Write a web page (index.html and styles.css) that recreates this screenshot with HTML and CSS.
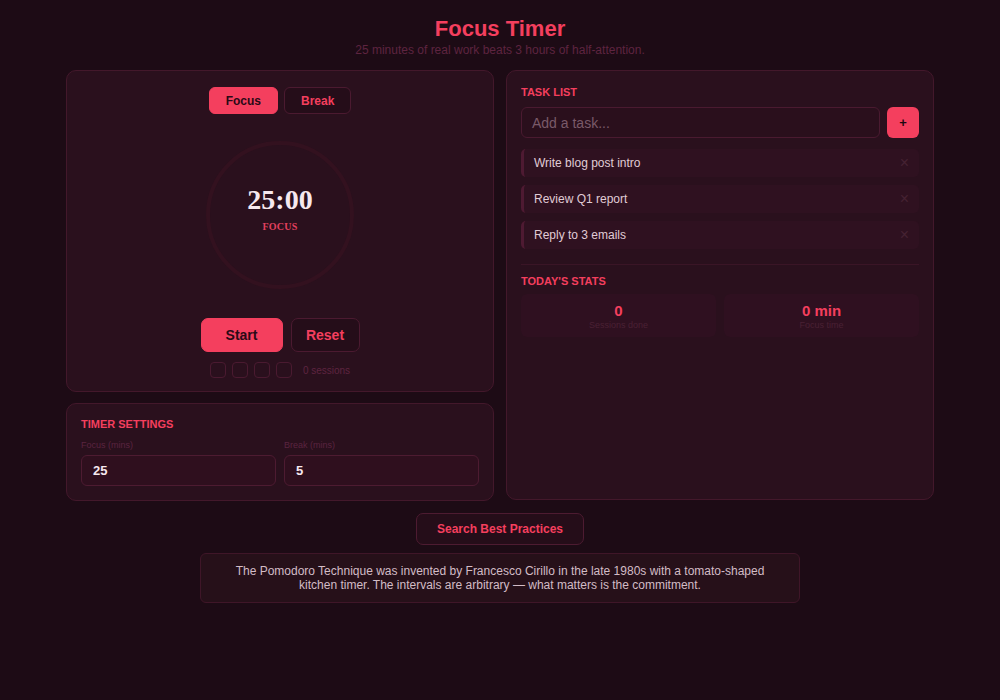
FILE: index.html
```html
<!DOCTYPE html>
<html lang="en">
<head>
<meta charset="utf-8">
<title>Focus Timer</title>
<link rel="stylesheet" href="styles.css">
</head>
<body>
<header class="header">
  <h1 class="title">Focus Timer</h1>
  <p class="subtitle">25 minutes of real work beats 3 hours of half-attention.</p>
</header>
<main class="grid">
  <div class="col">
    <section class="card timer-card">
      <div class="tabs">
        <button class="tab tab-active">Focus</button>
        <button class="tab">Break</button>
      </div>
      <div class="ring">
        <div class="time">25:00</div>
        <div class="mode">FOCUS</div>
      </div>
      <div class="controls">
        <button class="btn btn-primary">Start</button>
        <button class="btn btn-ghost">Reset</button>
      </div>
      <div class="sessions">
        <span class="dot"></span><span class="dot"></span><span class="dot"></span><span class="dot"></span>
        <span class="sessions-label">0 sessions</span>
      </div>
    </section>
    <section class="card settings-card">
      <h2 class="section-title">TIMER SETTINGS</h2>
      <div class="settings-row">
        <label class="field">
          <span class="field-label">Focus (mins)</span>
          <span class="field-input">25</span>
        </label>
        <label class="field">
          <span class="field-label">Break (mins)</span>
          <span class="field-input">5</span>
        </label>
      </div>
    </section>
  </div>
  <section class="card task-card">
    <h2 class="section-title">TASK LIST</h2>
    <div class="add-row">
      <div class="task-input">Add a task...</div>
      <button class="add-btn">+</button>
    </div>
    <ul class="tasks">
      <li class="task"><span>Write blog post intro</span><span class="x">×</span></li>
      <li class="task"><span>Review Q1 report</span><span class="x">×</span></li>
      <li class="task"><span>Reply to 3 emails</span><span class="x">×</span></li>
    </ul>
    <hr class="divider">
    <h2 class="section-title">TODAY'S STATS</h2>
    <div class="stats">
      <div class="stat"><div class="stat-value">0</div><div class="stat-label">Sessions done</div></div>
      <div class="stat"><div class="stat-value">0 min</div><div class="stat-label">Focus time</div></div>
    </div>
  </section>
</main>
<footer class="footer">
  <button class="search-btn">Search Best Practices</button>
  <div class="fact">The Pomodoro Technique was invented by Francesco Cirillo in the late 1980s with a tomato-shaped kitchen timer. The intervals are arbitrary — what matters is the commitment.</div>
</footer>
</body>
</html>
```
FILE: styles.css
```css
* { box-sizing: border-box; }
html, body { margin: 0; padding: 0; }
body {
  background: #1d0b15;
  font-family: "Liberation Sans", Arial, sans-serif;
  color: #e6d3dc;
  width: 1000px;
  height: 700px;
  overflow: hidden;
}
button { font-family: inherit; cursor: pointer; }

.header { text-align: center; padding-top: 16px; }
.title {
  margin: 0;
  font-size: 22px;
  line-height: 25px;
  font-weight: 700;
  color: #f43f5e;
}
.subtitle {
  margin: 2px 0 0;
  font-size: 12px;
  line-height: 14px;
  color: #5e2440;
}

.grid {
  width: 868px;
  margin: 13px auto 0;
  display: grid;
  grid-template-columns: 428px 428px;
  gap: 12px;
}
.col { display: flex; flex-direction: column; gap: 11px; }

.card {
  background: #2a101d;
  border: 1px solid #43182b;
  border-radius: 10px;
}

.timer-card {
  height: 322px;
  padding: 16px 14px 0;
  display: flex;
  flex-direction: column;
  align-items: center;
}
.tabs { display: flex; gap: 6px; }
.tab {
  height: 27px;
  padding: 0 16px;
  font-size: 12px;
  font-weight: 700;
  border-radius: 6px;
  border: 1px solid #4b1a30;
  background: #250d19;
  color: #f43f5e;
}
.tab-active {
  background: #f43f5e;
  border-color: #f43f5e;
  color: #2a0a16;
}

.ring {
  margin-top: 27px;
  width: 148px;
  height: 148px;
  border-radius: 50%;
  border: 4px solid #33111f;
  display: flex;
  flex-direction: column;
  align-items: center;
  justify-content: center;
  font-family: "Liberation Serif", "Times New Roman", serif;
  font-weight: 700;
}
.time { font-size: 28px; line-height: 30px; color: #f6e8ee; margin-top: -12px; }
.mode { font-size: 10px; line-height: 12px; color: #e2405f; margin-top: 6px; letter-spacing: 0.2px; }

.controls { display: flex; gap: 8px; margin-top: 29px; }
.btn {
  height: 34px;
  border-radius: 7px;
  font-size: 14px;
  font-weight: 700;
}
.btn-primary {
  width: 82px;
  background: #f43f5e;
  border: 1px solid #f43f5e;
  color: #2a0a16;
}
.btn-ghost {
  width: 69px;
  background: #250d19;
  border: 1px solid #4b1a30;
  color: #f43f5e;
}
.sessions { display: flex; align-items: center; gap: 6px; margin-top: 10px; }
.dot {
  width: 16px;
  height: 16px;
  border: 1px solid #4a1a30;
  border-radius: 4px;
}
.sessions-label { font-size: 10px; color: #5e2440; margin-left: 5px; }

.settings-card { height: 98px; padding: 14px 14px 0; }
.section-title {
  margin: 0;
  font-size: 11px;
  line-height: 13px;
  font-weight: 700;
  color: #f43f5e;
}
.settings-row {
  display: grid;
  grid-template-columns: 1fr 1fr;
  gap: 8px;
  margin-top: 9px;
}
.field { display: flex; flex-direction: column; }
.field-label { font-size: 9px; line-height: 11px; color: #5a2440; }
.field-input {
  margin-top: 4px;
  height: 31px;
  border: 1px solid #4d1b31;
  border-radius: 6px;
  background: #2f0f1e;
  font-size: 13px;
  font-weight: 700;
  color: #f6e8ee;
  padding: 0 11px;
  display: flex;
  align-items: center;
}

.task-card { height: 430px; padding: 15px 14px 0; }
.add-row { display: flex; gap: 7px; margin-top: 8px; }
.task-input {
  flex: 1;
  height: 31px;
  border: 1px solid #4a1a30;
  border-radius: 6px;
  background: #2a0f1c;
  color: #7a5a69;
  font-size: 14px;
  padding: 0 10px;
  display: flex;
  align-items: center;
}
.add-btn {
  width: 32px;
  height: 31px;
  border: none;
  border-radius: 6px;
  background: #f43f5e;
  color: #1d0810;
  font-size: 13px;
  font-weight: 700;
  padding: 0;
}
.tasks { list-style: none; margin: 11px 0 0; padding: 0; display: flex; flex-direction: column; gap: 8px; }
.task {
  height: 28px;
  background: #2f1120;
  border-left: 3px solid #4e1a32;
  border-radius: 5px;
  padding: 0 10px 0 10px;
  display: flex;
  align-items: center;
  justify-content: space-between;
  font-size: 12px;
  color: #e0ccd6;
}
.x { color: #452232; font-size: 16px; line-height: 16px; }
.divider {
  margin: 15px 0 10px;
  border: none;
  border-top: 1px solid #3a1526;
}
.stats {
  display: grid;
  grid-template-columns: 1fr 1fr;
  gap: 8px;
  margin-top: 6px;
}
.stat {
  height: 43px;
  background: #2f1020;
  border-radius: 6px;
  text-align: center;
  padding-top: 8px;
}
.stat-value { font-size: 15px; line-height: 17px; font-weight: 700; color: #f43f5e; }
.stat-label { font-size: 9px; line-height: 11px; color: #4a2034; margin-top: 1px; }

.footer { display: flex; flex-direction: column; align-items: center; margin-top: 12px; }
.search-btn {
  width: 168px;
  height: 32px;
  border: 1px solid #4d1b31;
  border-radius: 7px;
  background: #250d19;
  color: #f43f5e;
  font-size: 12px;
  font-weight: 700;
}
.fact {
  margin-top: 8px;
  width: 600px;
  height: 50px;
  border: 1px solid #3f1628;
  border-radius: 6px;
  background: #261019;
  font-size: 12px;
  line-height: 14px;
  color: #d3bcc6;
  text-align: center;
  padding: 10px 30px 0;
}
```
